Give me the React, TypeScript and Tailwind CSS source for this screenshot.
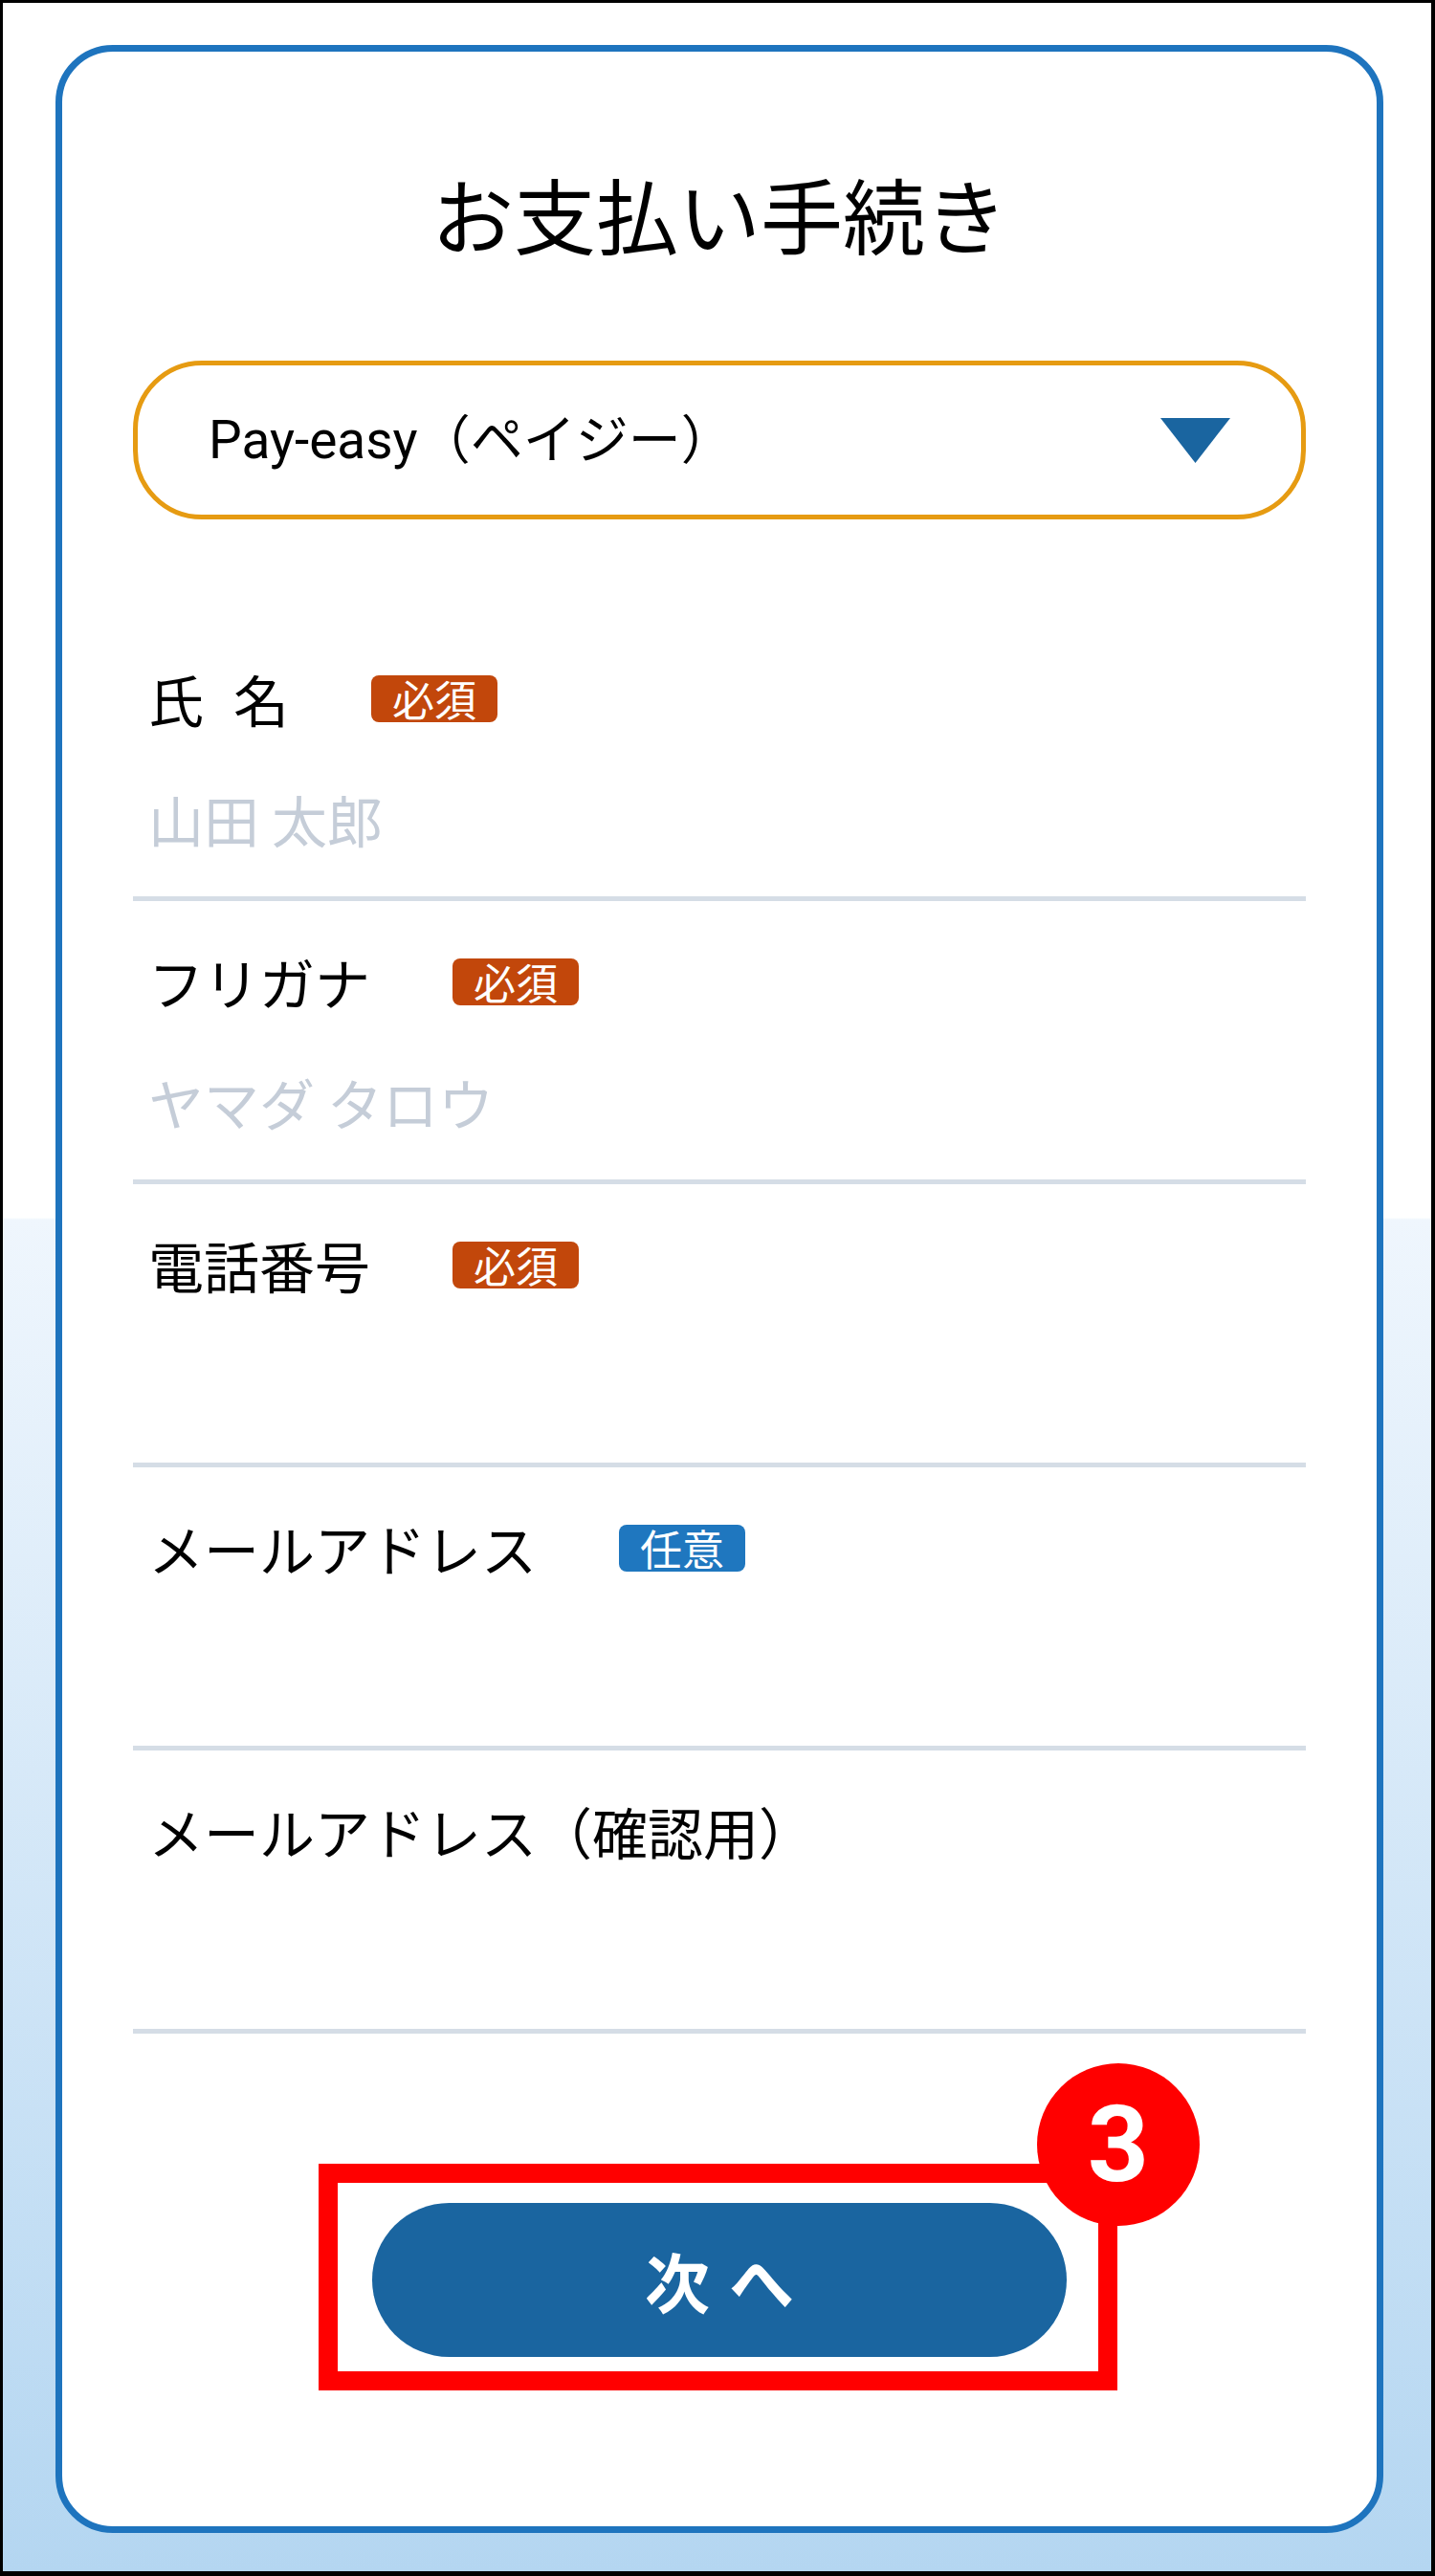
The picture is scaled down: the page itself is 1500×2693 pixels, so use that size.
import React from "react"

const fields = [
  { label: "氏 名", badge: "必須", placeholder: "山田 太郎" },
  { label: "フリガナ", badge: "必須", placeholder: "ヤマダ タロウ" },
  { label: "電話番号", badge: "必須", placeholder: "" },
  { label: "メールアドレス", badge: "任意", placeholder: "" },
  { label: "メールアドレス（確認用）", badge: "", placeholder: "" },
]

function Badge({ text }: { text: string }) {
  const color = text === "任意" ? "bg-[#1f77bf]" : "bg-[#c2470b]"
  return (
    <span
      className={`ml-[86px] flex h-[49px] w-[132px] items-center justify-center rounded-[8px] ${color} text-[44px] leading-none text-white`}
    >
      {text}
    </span>
  )
}

export default function App() {
  return (
    <div
      className="h-[2693px] w-[1500px] border-b-[5px] border-l-[3px] border-r-[4px] border-t-[3px] border-black bg-[linear-gradient(to_bottom,#ffffff_0px,#ffffff_1270px,#eff6fd_1272px,#b4d6f1_2685px)] pl-[55px] pt-[44px]"
      style={{ fontFamily: '"Noto Sans CJK JP", "Noto Sans", sans-serif' }}
    >
      <div className="h-[2601px] w-[1388px] rounded-[60px] border-[7px] border-[#1e74be] bg-white px-[74px] pt-[126px]">
        <h1 className="text-center text-[86px] font-normal leading-[86px] text-black">お支払い手続き</h1>

        <div className="mt-[111px] flex h-[166px] items-center justify-between rounded-[72px] border-[5px] border-[#e69b12] pl-[74px] pr-[74px]">
          <span
            className="text-[55px] leading-none text-black"
            style={{ fontFamily: 'Roboto, "Noto Sans CJK JP", sans-serif' }}
          >
            Pay-easy（ペイジー）
          </span>
          <svg width="73" height="47" viewBox="0 0 73 47">
            <polygon points="0,0 73,0 36.5,47" fill="#1a65a0" />
          </svg>
        </div>

        <div className="mt-[103px]">
          {fields.map((f, i) => (
            <div key={i} className="border-b-[5px] border-[#d5dde6] pb-[51px] pl-[16px] pt-[54px]">
              <div className="flex h-[60px] items-center">
                <span className="text-[58px] leading-[60px] text-black [word-spacing:18px]">{f.label}</span>
                {f.badge && <Badge text={f.badge} />}
              </div>
              <div className="mt-[66px] h-[60px] text-[58px] leading-[60px] text-[#c5cdd8]">{f.placeholder}</div>
            </div>
          ))}
        </div>

        <div className="relative mx-auto mt-[177px] w-[726px]">
          <button className="flex h-[161px] w-[726px] items-center justify-center rounded-full bg-[#1a65a0] pl-[20px] text-[68px] font-bold tracking-[20px] text-white">
            次へ
          </button>
          <div className="pointer-events-none absolute bottom-[-35px] left-[-56px] right-[-53px] top-[-41px] border-[20px] border-[#ff0000]" />
          <div className="absolute left-[695px] top-[-146px] flex h-[170px] w-[170px] items-center justify-center rounded-full bg-[#ff0000]">
            <span
              className="text-[112px] font-bold leading-none text-white"
              style={{ fontFamily: 'Roboto, "Liberation Sans", sans-serif' }}
            >
              3
            </span>
          </div>
        </div>
      </div>
    </div>
  )
}
